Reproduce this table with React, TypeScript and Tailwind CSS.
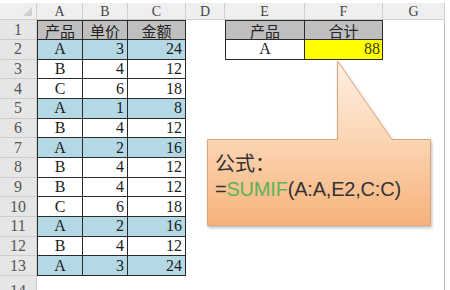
import React from 'react';

type Row = { a: string; b: string; c: string; blue?: boolean };

const rows: Row[] = [
  { a: 'A', b: '3', c: '24', blue: true },
  { a: 'B', b: '4', c: '12' },
  { a: 'C', b: '6', c: '18' },
  { a: 'A', b: '1', c: '8', blue: true },
  { a: 'B', b: '4', c: '12' },
  { a: 'A', b: '2', c: '16', blue: true },
  { a: 'B', b: '4', c: '12' },
  { a: 'B', b: '4', c: '12' },
  { a: 'C', b: '6', c: '18' },
  { a: 'A', b: '2', c: '16', blue: true },
  { a: 'B', b: '4', c: '12' },
  { a: 'A', b: '3', c: '24', blue: true },
];

const colHead = 'flex items-center justify-center bg-[#efefef] border-r border-b border-[#cfcfcf] text-[14px] text-[#444] font-["Liberation_Serif",serif]';
const rowHead = 'flex items-center justify-center bg-[#e6e6e6] border-r border-b border-[#cdcdcd] text-[16px] text-[#555] font-["Liberation_Serif",serif]';
const cell = 'flex items-center border-r border-b border-[#2a2a2a] text-[16px] text-[#1c1c1c] font-["Liberation_Serif",serif] leading-none';
const head = 'flex items-center justify-center border-r border-b border-t border-[#2a2a2a] bg-[#bfbfbf] text-[15px] text-[#222] font-["Noto_Sans_CJK_SC",sans-serif] leading-none';
const gEdge = 'border-r border-[#bdbdbd]';

export default function App() {
  return (
    <div className="relative w-[450px] h-[290px] overflow-hidden bg-white pt-[3px]">
      <div className="grid grid-cols-[37px_46px_45px_58px_39px_80px_78px_62px] grid-rows-[17px_20px_repeat(12,19.67px)_20px]">
        {/* column headers */}
        <div className={`${colHead} justify-end items-end pr-[4px] pb-[3px]`}>
          <svg width="9" height="9" viewBox="0 0 9 9">
            <polygon points="9,0 9,9 0,9" fill="#cfcfcf" />
          </svg>
        </div>
        {['A', 'B', 'C', 'D', 'E', 'F', 'G'].map((c) => (
          <div key={c} className={colHead}>{c}</div>
        ))}

        {/* row 1 */}
        <div className={rowHead}>1</div>
        <div className={`${head} border-l`}>产品</div>
        <div className={head}>单价</div>
        <div className={head}>金额</div>
        <div />
        <div className={`${head} border-l`}>产品</div>
        <div className={head}>合计</div>
        <div className={gEdge} />

        {rows.map((r, i) => {
          const bg = r.blue ? 'bg-[#b5d9e4]' : 'bg-white';
          const n = i + 2;
          return (
            <React.Fragment key={n}>
              <div className={rowHead}>{n}</div>
              <div className={`${cell} ${bg} border-l justify-center`}>{r.a}</div>
              <div className={`${cell} ${bg} justify-end pr-[3px]`}>{r.b}</div>
              <div className={`${cell} ${bg} justify-end pr-[3px]`}>{r.c}</div>
              <div />
              {n === 2 ? (
                <>
                  <div className={`${cell} bg-white border-l justify-center`}>A</div>
                  <div className={`${cell} bg-[#ffff00] justify-end pr-[2px] font-["Liberation_Sans",sans-serif] text-[16px] text-[#3a3a10]`}>88</div>
                </>
              ) : (
                <>
                  <div />
                  <div />
                </>
              )}
              <div className={gEdge} />
            </React.Fragment>
          );
        })}

        {/* row 14 */}
        <div className={`${rowHead} items-start pt-[3px]`}>14</div>
        <div />
        <div />
        <div />
        <div />
        <div />
        <div />
        <div className={gEdge} />
      </div>

      {/* callout */}
      <svg className="absolute left-0 top-0 pointer-events-none" width="450" height="290" viewBox="0 0 450 290">
        <defs>
          <linearGradient id="peach" x1="0" y1="60" x2="0" y2="226" gradientUnits="userSpaceOnUse">
            <stop offset="0" stopColor="#fff0e4" />
            <stop offset="0.45" stopColor="#fcd7b7" />
            <stop offset="1" stopColor="#f7b27a" />
          </linearGradient>
          <filter id="sh" x="-10%" y="-10%" width="130%" height="130%">
            <feDropShadow dx="1" dy="2" stdDeviation="1.5" floodColor="#000" floodOpacity="0.25" />
          </filter>
        </defs>
        <path
          d="M207.5 139.5 H337.5 V61 L392 139.5 H430.5 V225.5 H207.5 Z"
          fill="url(#peach)"
          stroke="#dea67a"
          strokeWidth="1"
          filter="url(#sh)"
        />
      </svg>
      <div className="absolute left-[215px] top-[149px] flex flex-col text-[#333]">
        <div className="h-[27px] text-[20px] leading-[27px] font-['Noto_Sans_CJK_SC',sans-serif]">公式：</div>
        <div className="h-[26px] text-[20px] leading-[26px] font-['Liberation_Sans',sans-serif] tracking-[-0.2px]">
          =<span className="text-[#5cb356]">SUMIF</span>(A:A,E2,C:C)
        </div>
      </div>
    </div>
  );
}
